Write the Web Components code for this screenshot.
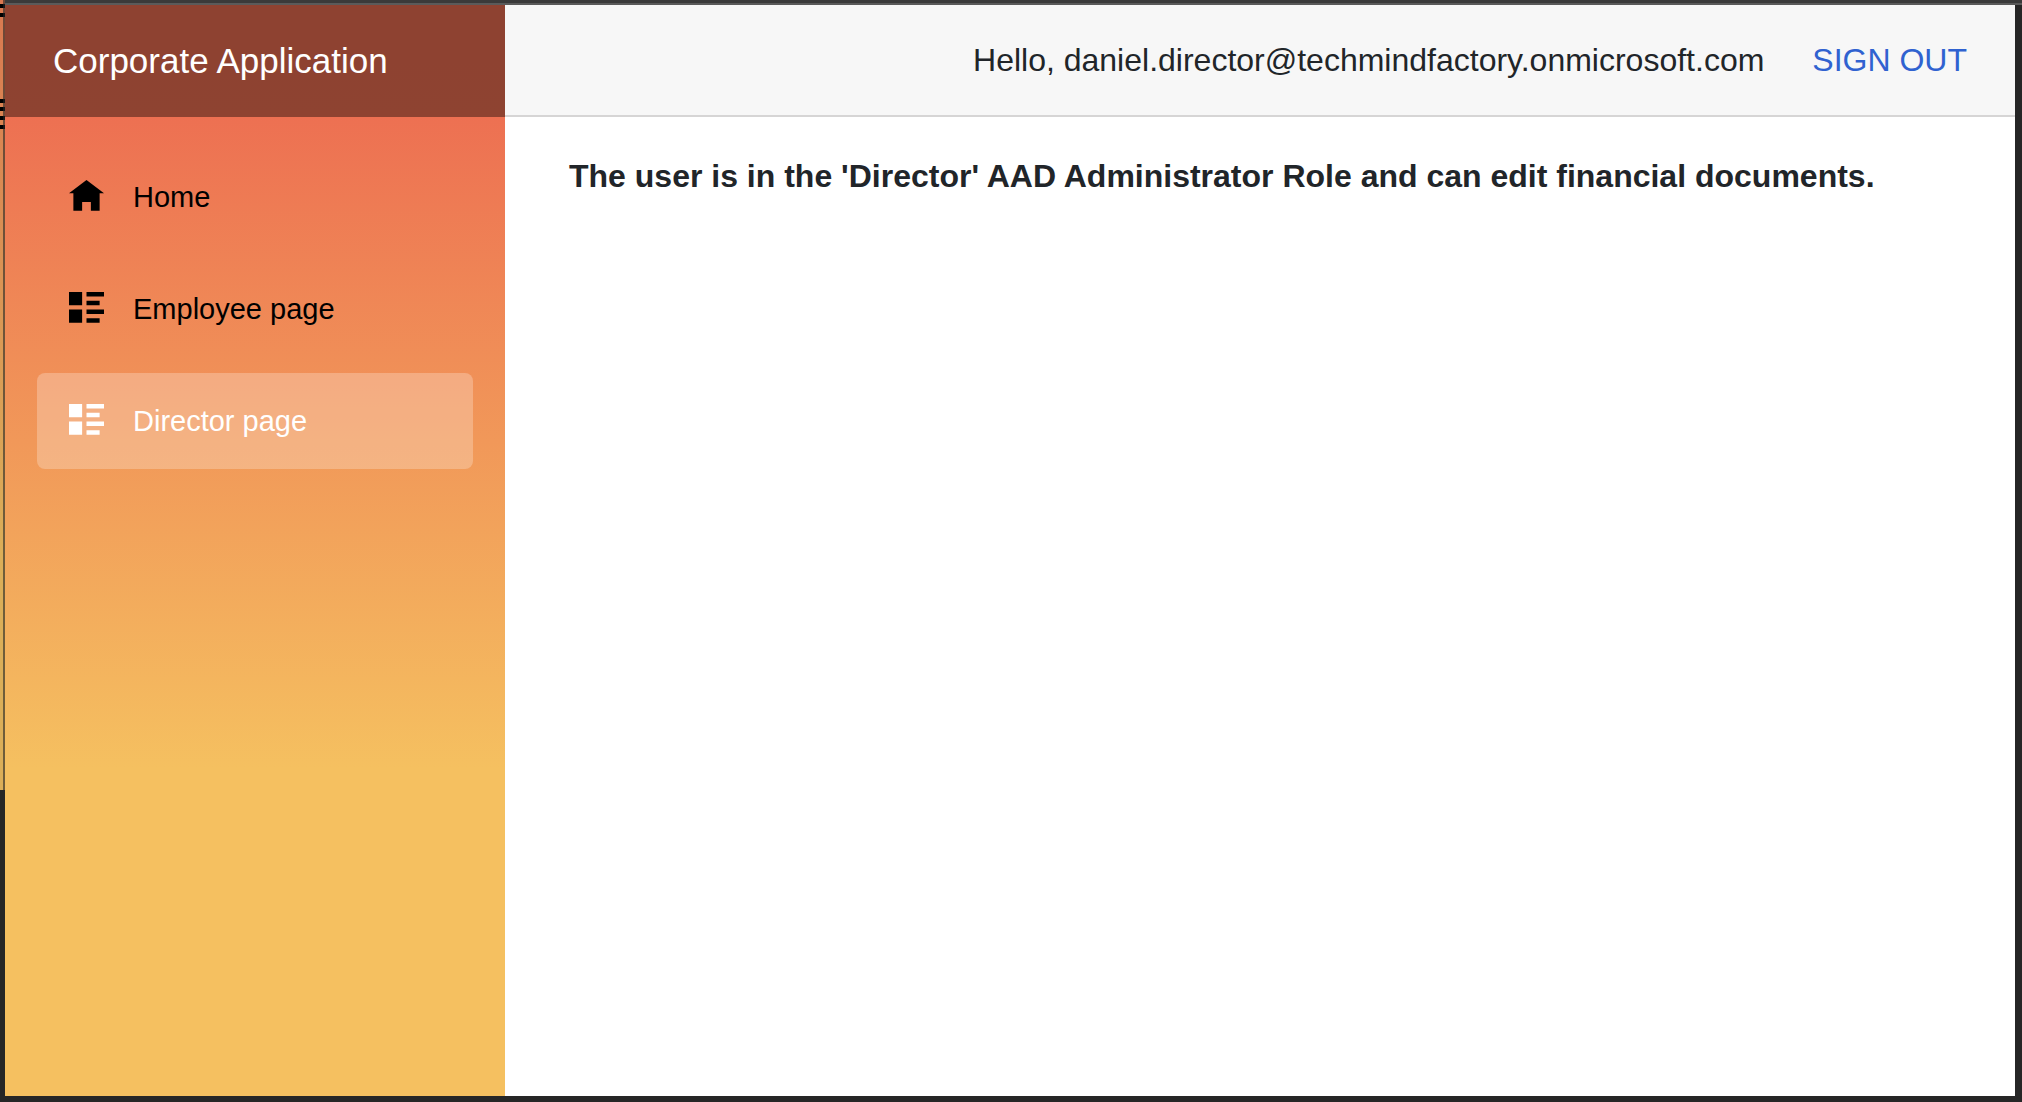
<!DOCTYPE html>
<html lang="en">
<head>
<meta charset="utf-8">
<meta name="viewport" content="width=device-width, initial-scale=1">
<title>Corporate Application</title>
<style>
html, body { height: 100%; margin: 0; }
body { font: 32px/48px "Liberation Sans", Arial, sans-serif; color: #212529; background: #262626; }
</style>
</head>
<body>
<desktop-frame>
  <app-shell>
    <nav-menu slot="sidebar" brand="Corporate Application">
      <nav-item icon="home" href="#home">Home</nav-item>
      <nav-item icon="list" href="#employee">Employee page</nav-item>
      <nav-item icon="list" href="#director" active>Director page</nav-item>
    </nav-menu>
    <top-row slot="header">
      <span>Hello, daniel.director@techmindfactory.onmicrosoft.com</span>
      <sign-out></sign-out>
    </top-row>
    <page-heading>The user is in the 'Director' AAD Administrator Role and can edit financial documents.</page-heading>
  </app-shell>
</desktop-frame>
<script>
const define = (name, render) => customElements.define(name, class extends HTMLElement {
  constructor() {
    super();
    this.attachShadow({ mode: "open" });
  }
  connectedCallback() {
    this.shadowRoot.innerHTML = render(this);
  }
});

// Window edges: title bar rim above, a sliver of the window behind on the left.
define("desktop-frame", () => `
  <style>
    :host { display: grid; grid-template: 5px 1fr 6px / 5px 1fr 7px; height: 100%; }
    .top { grid-area: 1 / 2 / 2 / 4; background: linear-gradient(#3a3a3a 3px, #5a5a5a 3px); }
    .behind { grid-area: 1 / 1 / 3 / 2; }
    .behind svg { display: block; width: 5px; height: 790px; }
    .content { grid-area: 2 / 2 / 3 / 3; min-width: 0; }
  </style>
  <div class="top"></div>
  <div class="behind">
    <svg viewBox="0 0 5 790" aria-hidden="true">
      <defs><linearGradient id="g" x1="0" y1="0" x2="0" y2="1">
        <stop offset="0" stop-color="#d97850"/><stop offset=".7" stop-color="#dbae58"/><stop offset="1" stop-color="#dbae58"/>
      </linearGradient></defs>
      <rect width="5" height="790" fill="url(#g)"/>
      <path d="M0 4h5v4H0zM0 13h5v4H0zM0 99h5v4H0zM0 107h5v4H0zM0 116h5v4H0zM0 125h5v4H0z"/>
      <rect x="3" width="2" height="790" fill="#262626" fill-opacity=".6"/>
    </svg>
  </div>
  <div class="content"><slot></slot></div>`);

define("app-shell", () => `
  <style>
    :host { display: flex; height: 100%; background: #fff; }
    aside { flex: none; width: 500px; background: linear-gradient(180deg, #ed6e52 0%, #ed7052 10%, #f5c060 70%); }
    main { flex: 1; min-width: 0; }
    .content { padding: 35px 64px 0; }
  </style>
  <aside><slot name="sidebar"></slot></aside>
  <main>
    <slot name="header"></slot>
    <div class="content"><slot></slot></div>
  </main>`);

define("nav-menu", el => `
  <style>
    :host { display: block; }
    header { display: flex; align-items: center; height: 112px; padding: 0 48px; background: rgba(0,0,0,.4); }
    a { color: #fff; font-size: 35px; text-decoration: none; }
    nav { display: flex; flex-direction: column; gap: 16px; padding: 32px; }
  </style>
  <header><a href="#">${el.getAttribute("brand")}</a></header>
  <nav><slot></slot></nav>`);

const icons = {
  home: "M4 0l-4 3h1v4h2v-2h2v2h2v-4h1z",
  list: "M0 0v3h3v-3zM4 0v1h4v-1zM4 2v1h3v-1zM0 4v3h3v-3zM4 4v1h4v-1zM4 6v1h3v-1z"
};

define("nav-item", el => `
  <style>
    :host { display: block; }
    a { display: flex; align-items: center; height: 96px; padding: 0 32px; border-radius: 8px;
        font-size: 29px; color: #000; text-decoration: none; }
    :host([active]) a { color: #fff; background: rgba(255,255,255,.25); }
    .icon { flex: none; width: 64px; }
    svg { display: block; width: 35px; height: 35px; fill: currentColor; }
  </style>
  <a href="${el.getAttribute("href")}"${el.hasAttribute("active") ? ' aria-current="page"' : ""}>
    <span class="icon"><svg viewBox="0 0 8 8" aria-hidden="true"><path d="${icons[el.getAttribute("icon")]}"/></svg></span>
    <slot></slot>
  </a>`);

define("top-row", () => `
  <style>
    :host { display: flex; align-items: center; justify-content: flex-end; gap: 48px; box-sizing: border-box;
            height: 112px; padding: 0 48px; background: #f7f7f7; border-bottom: 2px solid #d6d5d5; white-space: nowrap; }
  </style>
  <slot></slot>`);

define("sign-out", () => `
  <style>
    :host { display: block; }
    button { display: block; padding: 0; border: 0; background: none; font: inherit; color: #3062d0; cursor: pointer; }
  </style>
  <button type="button">SIGN OUT</button>`);

define("page-heading", () => `
  <style>
    :host { display: block; }
    h1 { margin: 0; font: inherit; font-weight: 700; }
  </style>
  <h1><slot></slot></h1>`);
</script>
</body>
</html>
